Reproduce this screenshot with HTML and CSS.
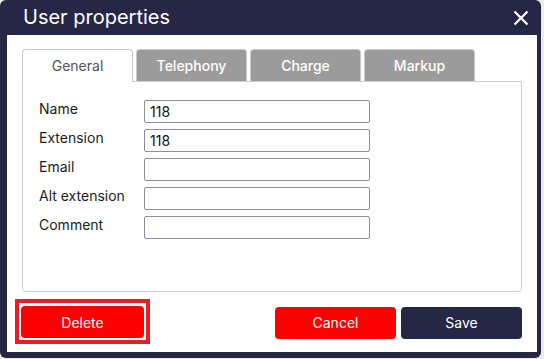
FILE: index.html
```html
<!DOCTYPE html>
<html lang="en">
<head>
  <meta charset="UTF-8" />
  <title>User properties</title>
  <link rel="stylesheet" href="styles.css">
</head>
<body>
  <div class="dialog">
    <div class="dialog-header">
      <span class="dialog-title">User properties</span>
      <button class="close-btn" aria-label="Close">
        <svg width="16" height="16" viewBox="0 0 16 16">
          <path d="M1.5 1.5 L14.5 14.5 M14.5 1.5 L1.5 14.5" stroke="#fff" stroke-width="2.2" fill="none"/>
        </svg>
      </button>
    </div>

    <div class="dialog-body">
      <div class="tabs">
        <div class="tab active">General</div>
        <div class="tab">Telephony</div>
        <div class="tab">Charge</div>
        <div class="tab">Markup</div>
      </div>

      <div class="tab-panel">
        <div class="form">
          <label>Name</label>
          <input type="text" value="118">
          <label>Extension</label>
          <input type="text" value="118">
          <label>Email</label>
          <input type="text">
          <label>Alt extension</label>
          <input type="text">
          <label>Comment</label>
          <input type="text">
        </div>
      </div>

      <div class="actions">
        <div class="highlight">
          <button class="btn btn-red btn-delete">Delete</button>
        </div>
        <div class="spacer"></div>
        <button class="btn btn-red">Cancel</button>
        <button class="btn btn-dark">Save</button>
      </div>
    </div>
  </div>
</body>
</html>
```

FILE: styles.css
```css
body {
  margin: 0;
  padding: 0;
  background: #ececec;
  font-family: Inter, "Noto Sans", sans-serif;
  color: #1c1c1c;
}

.dialog {
  width: 541px;
  height: 358px;
  box-sizing: border-box;
  background: #262645;
  border-radius: 6px;
  padding: 0 4px 6px 7px;
  display: flex;
  flex-direction: column;
}

.dialog-header {
  height: 35px;
  display: flex;
  align-items: center;
  justify-content: space-between;
  padding: 0 8px 0 16px;
}

.dialog-title {
  color: #fff;
  font-size: 20px;
  margin-top: -2px;
}

.close-btn {
  background: none;
  border: none;
  padding: 0;
  display: flex;
  cursor: pointer;
}

.dialog-body {
  flex: 1;
  background: #fff;
  padding: 14px 15px 0 15px;
  display: flex;
  flex-direction: column;
}

.tabs {
  display: flex;
  gap: 3px;
  height: 32px;
}

.tab {
  width: 111px;
  box-sizing: border-box;
  background: #9b9b9b;
  color: #fff;
  font-size: 14px;
  font-weight: 500;
  border: 1px solid #c8c8c8;
  border-bottom: none;
  border-radius: 4px 4px 0 0;
  display: flex;
  align-items: center;
  justify-content: center;
}

.tab.active {
  background: #fff;
  color: #555;
  font-weight: 400;
  position: relative;
  z-index: 1;
  height: 33px;
  padding-bottom: 1px;
}

.tab-panel {
  height: 211px;
  box-sizing: border-box;
  border: 1px solid #cfcfcf;
  border-radius: 0 0 4px 4px;
  padding: 18px 0 0 16px;
}

.form {
  display: grid;
  grid-template-columns: 105px 226px;
  grid-auto-rows: 23px;
  row-gap: 6px;
}

.form label {
  font-size: 14px;
  line-height: 18px;
}

.form input {
  box-sizing: border-box;
  width: 226px;
  height: 23px;
  border: 1px solid #8f8c9e;
  border-radius: 2px;
  padding: 0 5px;
  font-family: Inter, "Noto Sans", sans-serif;
  font-size: 14px;
  color: #111;
}

.actions {
  display: flex;
  align-items: center;
  gap: 5px;
  margin-top: 7px;
}

.spacer { flex: 1; }

.highlight {
  margin-left: -7px;
  border: 4px solid #ed1c24;
  padding: 3px 2px 2px 2px;
  display: flex;
}

.btn {
  height: 32px;
  width: 121px;
  border: none;
  border-radius: 4px;
  color: #fff;
  font-family: Inter, "Noto Sans", sans-serif;
  font-size: 14px;
  cursor: pointer;
}

.actions > .btn { margin-top: 2px; }

.btn-red { background: #ff0000; }
.btn-dark { background: #262645; }

.btn-delete {
  width: 123px;
}
```
